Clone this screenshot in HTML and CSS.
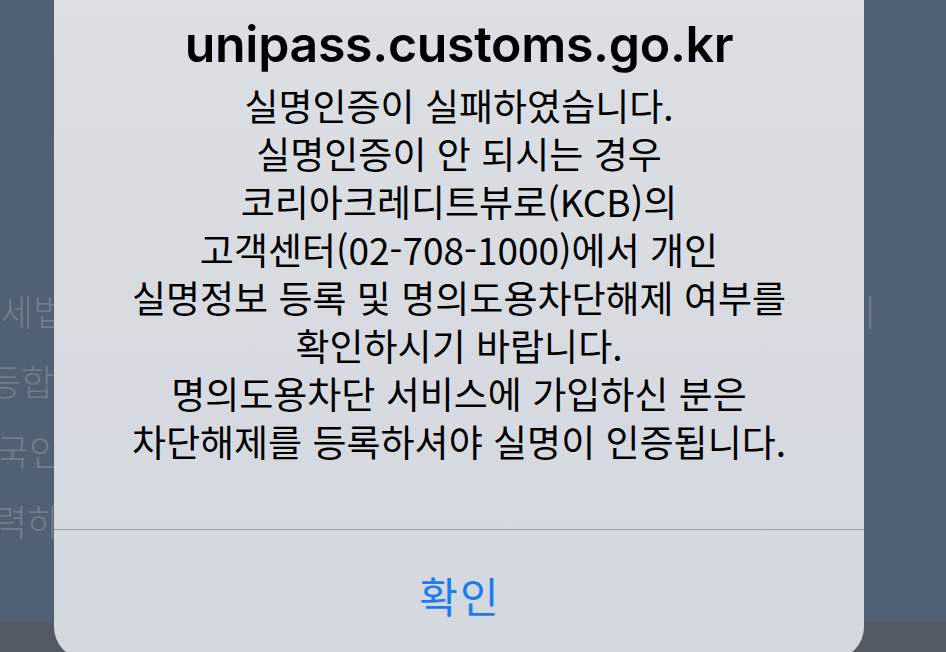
FILE: index.html
```html
<!DOCTYPE html>
<html lang="ko">
<head>
    <meta charset="UTF-8">
    <meta name="viewport" content="width=device-width, initial-scale=1.0">
    <title>unipass.customs.go.kr</title>
    <link rel="stylesheet" href="styles.css">
</head>
<body>
    <!-- 뒤쪽 페이지 (흐리게 보이는 부분) -->
    <div class="backdrop">
        <div class="backdrop-line"><span>세법에 따라 확인이</span><span class="backdrop-right">이</span></div>
        <div class="backdrop-line shift-2">등합니다</div>
        <div class="backdrop-line shift-3">국인 등록번호</div>
        <div class="backdrop-line shift-4">력하십시오</div>
    </div>
    <div class="backdrop-bar"></div>

    <!-- 알림창 -->
    <div class="alert">
        <div class="alert-body">
            <h1 class="alert-title">unipass.customs.go.kr</h1>
            <p class="alert-message">
                실명인증이 실패하였습니다.<br>
                실명인증이 안 되시는 경우<br>
                코리아크레디트뷰로(KCB)의<br>
                고객센터(02-708-1000)에서 개인<br>
                실명정보 등록 및 명의도용차단해제 여부를<br>
                확인하시기 바랍니다.<br>
                명의도용차단 서비스에 가입하신 분은<br>
                차단해제를 등록하셔야 실명이 인증됩니다.
            </p>
        </div>
        <div class="alert-actions">
            <button class="alert-button">확인</button>
        </div>
    </div>
</body>
</html>
```

FILE: styles.css
```css
html, body {
    margin: 0;
    padding: 0;
    height: 100%;
    overflow: hidden;
}

body {
    background-color: #4f6172;
    font-family: "Inter", "Noto Sans CJK KR", sans-serif;
    display: flex;
    flex-direction: column;
}

/* 뒤쪽 페이지 */
.backdrop {
    flex: 1;
    padding-top: 275px;
    color: #737e8a;
    font-family: "Noto Sans CJK KR", sans-serif;
    font-size: 36px;
    font-weight: 300;
    line-height: 70px;
    white-space: nowrap;
}

.backdrop-line {
    display: flex;
    justify-content: space-between;
}

.backdrop-right {
    margin-right: 70px;
}

.shift-2 {
    margin-left: -12px;
}

.shift-3 {
    margin-left: -4px;
}

.shift-4 {
    margin-left: -6px;
}

.backdrop-bar {
    height: 30px;
    background-color: #545a63;
}

/* 알림창 */
.alert {
    position: absolute;
    top: -40px;
    left: 54px;
    width: 810px;
    height: 699px;
    border-radius: 32px;
    background: linear-gradient(#dcdfe3, #d3d8df);
    display: flex;
    flex-direction: column;
    overflow: hidden;
}

.alert-body {
    flex: 1;
    padding-top: 54px;
    text-align: center;
}

.alert-title {
    margin: 0;
    font-size: 50px;
    line-height: 60px;
    font-weight: 600;
    letter-spacing: -0.3px;
    color: #000;
}

.alert-message {
    margin: 7px 0 0;
    font-family: "Noto Sans CJK KR", sans-serif;
    font-size: 37px;
    line-height: 48px;
    color: #000;
}

.alert-actions {
    height: 129px;
    border-top: 1px solid #9aa0a7;
    display: flex;
    justify-content: center;
}

.alert-button {
    margin-top: 35px;
    align-self: flex-start;
    border: none;
    background: none;
    padding: 0 0 0 2px;
    font-family: "Noto Sans CJK KR", sans-serif;
    font-size: 42px;
    line-height: 60px;
    letter-spacing: 2px;
    color: #1b7cf0;
}
```
